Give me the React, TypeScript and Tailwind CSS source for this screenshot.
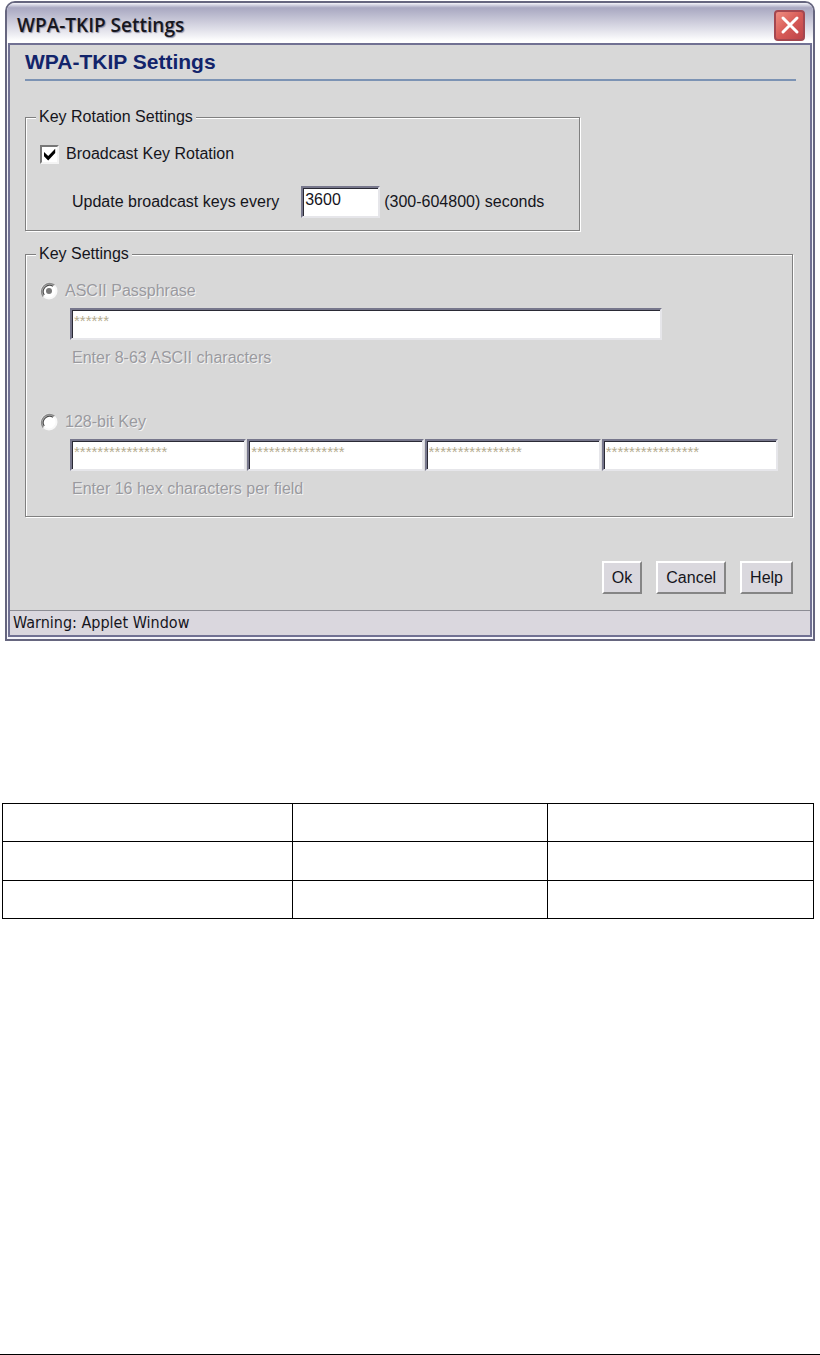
import { useState } from "react";
import type { InputHTMLAttributes, ReactNode } from "react";
import clsx from "clsx";

const HEX_FIELDS = [1, 2, 3, 4];
const MASKED_HEX = "****************";

const Group = ({ title, className, children }: { title: string; className?: string; children: ReactNode }) => (
	<fieldset
		className={clsx(
			"min-w-0 border border-[#808080] px-[14px] shadow-[1px_1px_0_#fff,inset_1px_1px_0_#fff]",
			className
		)}
	>
		<legend className="-ml-1 bg-[#d8d8d8] px-[3px] leading-5">{title}</legend>
		{children}
	</fieldset>
);

const TextField = ({ className, ...props }: InputHTMLAttributes<HTMLInputElement>) => (
	<input
		type="text"
		className={clsx(
			"h-8 min-w-0 border-2 border-t-[#77778c] border-l-[#77778c] border-r-[#e6e6ea] border-b-[#e6e6ea] bg-white px-[2px] pb-1 outline-none shadow-[inset_1px_1px_0_#2a2a35] disabled:pb-2 disabled:text-[15px] disabled:text-[#b5ac90]",
			className
		)}
		{...props}
	/>
);

const Radio = ({ id, label, checked }: { id: string; label: string; checked?: boolean }) => (
	<div className="flex items-center gap-[7px]">
		<span className="grid size-[18px]">
			<input
				id={id}
				type="radio"
				name="key-type"
				defaultChecked={checked}
				disabled
				className="peer col-start-1 row-start-1 size-[18px] appearance-none rounded-full"
			/>
			<svg
				viewBox="0 0 18 18"
				className="pointer-events-none col-start-1 row-start-1 size-[18px] peer-checked:[&>.dot]:opacity-100"
				fill="none"
			>
				<circle cx="9" cy="9" r="7.5" fill="#fff" stroke="#f8f8f8" strokeWidth="2" />
				<path d="M3.2 14.4A8 8 0 0 1 14.4 3.2" stroke="#8a8a8a" strokeWidth="1.6" />
				<path d="M4.2 13A6.4 6.4 0 0 1 13 4.2" stroke="#4c4c4c" strokeWidth="1.2" />
				<circle className="dot opacity-0" cx="9" cy="9" r="3" fill="#777" />
			</svg>
		</span>
		<label htmlFor={id} className="leading-5 text-[#9a9a9f] [text-shadow:1px_1px_0_#f4f4f4]">
			{label}
		</label>
	</div>
);

const Hint = ({ children }: { children: ReactNode }) => (
	<p className="mt-2 ml-8 leading-5 text-[#9a9a9f] [text-shadow:1px_1px_0_#f4f4f4]">{children}</p>
);

const DialogButton = ({ children }: { children: ReactNode }) => (
	<button
		type="button"
		className="h-[33px] border-2 border-t-white border-l-white border-r-[#858585] border-b-[#858585] bg-[#dad8de] px-2"
	>
		{children}
	</button>
);

const TitleBar = () => (
	<header className="flex h-[40px] items-center justify-between rounded-t-lg bg-linear-to-b from-[#f4f4fa] from-0% via-[#a9a8c1] via-12% to-white to-95% pr-2 pl-[10px]">
		<span className="mt-1 font-['Open_Sans',sans-serif] text-[19px] leading-6 font-semibold text-[#17171f] [text-shadow:1px_1px_1px_#8b8ba0]">
			WPA-TKIP Settings
		</span>
		<button
			type="button"
			aria-label="Close"
			className="mt-1 grid size-[31px] place-items-center rounded-sm border-2 border-[#a34750] bg-linear-to-br from-[#ef8d82] via-[#d75b57] to-[#bd4349]"
		>
			<svg viewBox="0 0 20 20" className="size-5" stroke="#fff" strokeWidth="3" strokeLinecap="round">
				<path d="M3 3l14 14M17 3L3 17" />
			</svg>
		</button>
	</header>
);

export default function App() {
	const [rotation, setRotation] = useState(true);
	const [interval, setInterval] = useState("3600");

	return (
		<div className="flex min-h-screen flex-col bg-white font-['Liberation_Sans',Arial,sans-serif] text-[16px] text-[#15151c]">
			<main className="mx-[5px] mt-px rounded-t-[10px] border-2 border-[#66667f] bg-[#f4f4fa] pb-[2px]">
				<TitleBar />
				<form className="mx-px border-2 border-[#717193] bg-[#d8d8d8]">
					<div className="pr-[14px] pb-4 pl-[15px]">
						<h1 className="border-b-2 border-[#7c93b4] pt-1 pb-1 text-[21px] leading-[26px] font-bold text-[#12246b]">
							WPA-TKIP Settings
						</h1>

						<Group title="Key Rotation Settings" className="mt-[26px] max-w-[555px] pb-3">
							<div className="mt-[17px] flex items-center gap-[7px]">
								<span className="grid size-[19px]">
									<input
										id="rotation"
										type="checkbox"
										checked={rotation}
										onChange={e => setRotation(e.target.checked)}
										className="peer col-start-1 row-start-1 size-[19px] appearance-none border-2 border-t-[#777] border-l-[#777] border-r-[#f4f4f4] border-b-[#f4f4f4] bg-white"
									/>
									<svg
										viewBox="0 0 19 19"
										className="pointer-events-none invisible col-start-1 row-start-1 size-[19px] peer-checked:visible"
									>
										<path d="M4 7v4.2l4.2 4.2 7-7.4V3.8L8.2 11z" fill="#000" />
									</svg>
								</span>
								<label htmlFor="rotation" className="leading-5">
									Broadcast Key Rotation
								</label>
							</div>
							<div className="mt-[22px] ml-8 flex items-center">
								<label htmlFor="interval" className="mr-[22px] leading-5">
									Update broadcast keys every
								</label>
								<TextField
									id="interval"
									value={interval}
									onChange={e => setInterval(e.target.value)}
									className="mr-1 w-[79px]"
								/>
								<span className="leading-5">(300-604800) seconds</span>
							</div>
						</Group>

						<Group title="Key Settings" className="mt-[13px] mr-[3px] pb-[17px]">
							<div className="mt-[17px]">
								<Radio id="ascii" label="ASCII Passphrase" checked />
								<div className="mt-[7px] mr-[116px] ml-[30px]">
									<TextField aria-label="ASCII Passphrase" defaultValue="******" disabled className="w-full" />
								</div>
								<Hint>Enter 8-63 ASCII characters</Hint>
							</div>
							<div className="mt-11">
								<Radio id="hex" label="128-bit Key" />
								<div className="mt-[7px] ml-[30px] flex gap-px">
									{HEX_FIELDS.map(n => (
										<TextField
											key={n}
											aria-label={`128-bit Key ${n}`}
											defaultValue={MASKED_HEX}
											disabled
											className="flex-1"
										/>
									))}
								</div>
								<Hint>Enter 16 hex characters per field</Hint>
							</div>
						</Group>

						<div className="mt-11 mr-[3px] flex justify-end gap-[14px]">
							<DialogButton>Ok</DialogButton>
							<DialogButton>Cancel</DialogButton>
							<DialogButton>Help</DialogButton>
						</div>
					</div>
					<footer className="border-t border-[#8c8c94] bg-[#dad7de] px-[3px] font-['DejaVu_Sans_Condensed','DejaVu_Sans',sans-serif] leading-6">
						Warning: Applet Window
					</footer>
				</form>
			</main>

			<div className="mt-[162px] mr-[6px] ml-[2px]">
				<table className="h-[116px] w-full table-fixed border-collapse">
					<colgroup>
						<col className="w-[35.8%]" />
						<col className="w-[31.4%]" />
						<col />
					</colgroup>
					<tbody>
						{[1, 2, 3].map(row => (
							<tr key={row}>
								<td className="border border-black" />
								<td className="border border-black" />
								<td className="border border-black" />
							</tr>
						))}
					</tbody>
				</table>
			</div>

			<hr className="mt-auto border-t border-black" />
		</div>
	);
}
